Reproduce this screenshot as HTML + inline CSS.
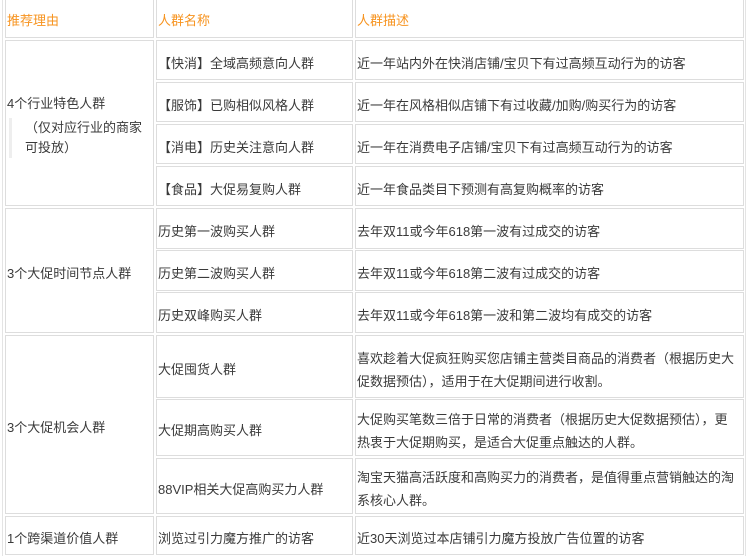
<!DOCTYPE html>
<html><head><meta charset="utf-8"><style>
body{margin:0;width:749px;height:556px;background:#fff;overflow:hidden;position:relative;font-family:"Liberation Sans","Noto Sans CJK SC",sans-serif;font-size:13px;color:#3a3a3a}
.c{position:absolute;box-sizing:border-box;border:1px solid #ddd;display:flex;align-items:center;padding-left:1px;padding-top:6px;line-height:23px;white-space:nowrap}
.h{color:#f7931e}
.o{position:absolute;left:2px;top:0;width:744px;height:556px;border-left:1px solid #e4e4e4;border-right:1px solid #e4e4e4;box-sizing:border-box}
</style></head><body>
<div class="o"></div>
<div class="c h" style="left:5px;top:-3px;width:149px;height:41px">推荐理由</div>
<div class="c h" style="left:156px;top:-3px;width:197px;height:41px">人群名称</div>
<div class="c h" style="left:355px;top:-3px;width:389px;height:41px">人群描述</div>

<div class="c" style="left:5px;top:40px;width:149px;height:166px;display:block;padding-top:51px">
<div>4个行业特色人群</div>
<div style="margin-top:3px;border-left:3px solid #eee;margin-left:2px;padding-left:13px;line-height:20px;white-space:normal">（仅对应行业的商家<br>可投放）</div>
</div>
<div class="c" style="left:156px;top:40px;width:197px;height:40px">【快消】全域高频意向人群</div>
<div class="c" style="left:355px;top:40px;width:389px;height:40px">近一年站内外在快消店铺/宝贝下有过高频互动行为的访客</div>
<div class="c" style="left:156px;top:82px;width:197px;height:40px">【服饰】已购相似风格人群</div>
<div class="c" style="left:355px;top:82px;width:389px;height:40px">近一年在风格相似店铺下有过收藏/加购/购买行为的访客</div>
<div class="c" style="left:156px;top:124px;width:197px;height:40px">【消电】历史关注意向人群</div>
<div class="c" style="left:355px;top:124px;width:389px;height:40px">近一年在消费电子店铺/宝贝下有过高频互动行为的访客</div>
<div class="c" style="left:156px;top:166px;width:197px;height:40px">【食品】大促易复购人群</div>
<div class="c" style="left:355px;top:166px;width:389px;height:40px">近一年食品类目下预测有高复购概率的访客</div>

<div class="c" style="left:5px;top:208px;width:149px;height:125px">3个大促时间节点人群</div>
<div class="c" style="left:156px;top:208px;width:197px;height:41px">历史第一波购买人群</div>
<div class="c" style="left:355px;top:208px;width:389px;height:41px">去年双11或今年618第一波有过成交的访客</div>
<div class="c" style="left:156px;top:250px;width:197px;height:41px">历史第二波购买人群</div>
<div class="c" style="left:355px;top:250px;width:389px;height:41px">去年双11或今年618第二波有过成交的访客</div>
<div class="c" style="left:156px;top:292px;width:197px;height:41px">历史双峰购买人群</div>
<div class="c" style="left:355px;top:292px;width:389px;height:41px">去年双11或今年618第一波和第二波均有成交的访客</div>

<div class="c" style="left:5px;top:335px;width:149px;height:179px">3个大促机会人群</div>
<div class="c" style="left:156px;top:335px;width:197px;height:63px">大促囤货人群</div>
<div class="c" style="left:355px;top:335px;width:389px;height:63px">喜欢趁着大促疯狂购买您店铺主营类目商品的消费者（根据历史大<br>促数据预估），适用于在大促期间进行收割。</div>
<div class="c" style="left:156px;top:399px;width:197px;height:57px">大促期高购买人群</div>
<div class="c" style="left:355px;top:399px;width:389px;height:57px">大促购买笔数三倍于日常的消费者（根据历史大促数据预估），更<br>热衷于大促期购买，是适合大促重点触达的人群。</div>
<div class="c" style="left:156px;top:458px;width:197px;height:56px">88VIP相关大促高购买力人群</div>
<div class="c" style="left:355px;top:458px;width:389px;height:56px">淘宝天猫高活跃度和高购买力的消费者，是值得重点营销触达的淘<br>系核心人群。</div>

<div class="c" style="left:5px;top:516px;width:149px;height:39px">1个跨渠道价值人群</div>
<div class="c" style="left:156px;top:516px;width:197px;height:39px">浏览过引力魔方推广的访客</div>
<div class="c" style="left:355px;top:516px;width:389px;height:39px">近30天浏览过本店铺引力魔方投放广告位置的访客</div>
</body></html>
